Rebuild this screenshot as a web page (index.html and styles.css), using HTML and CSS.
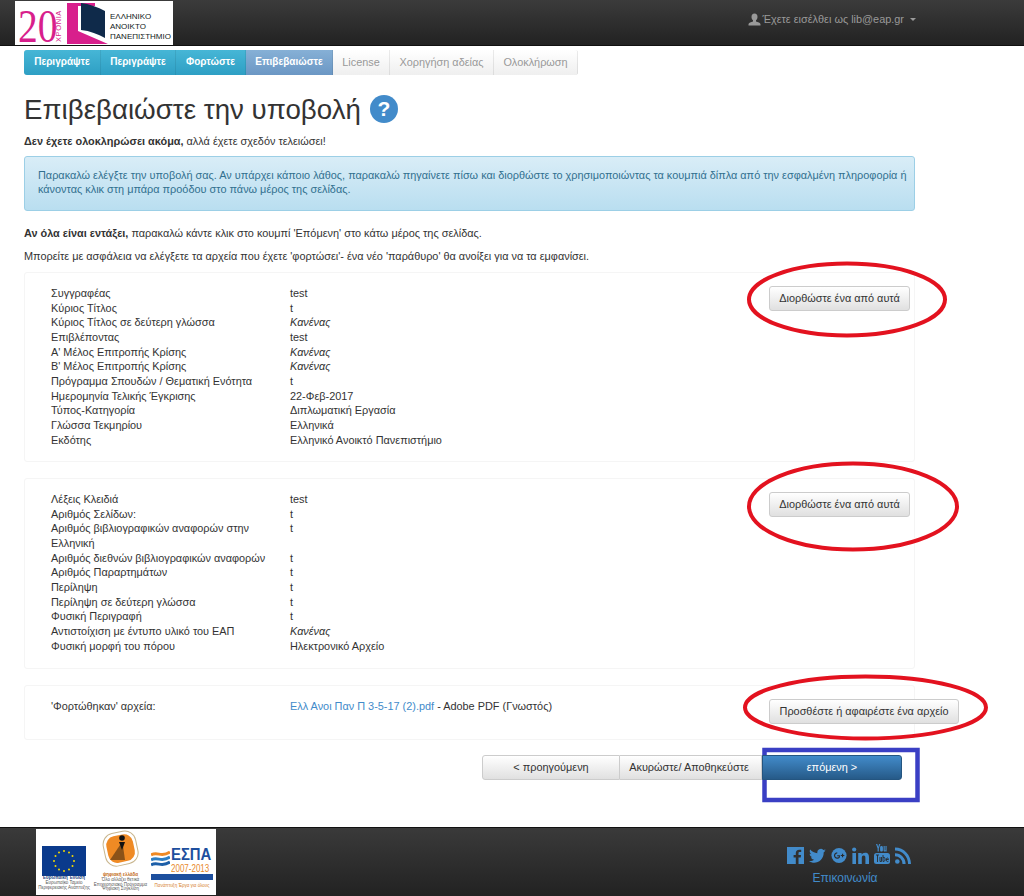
FILE: index.html
```html
<!DOCTYPE html>
<html lang="el">
<head>
<meta charset="utf-8">
<title>Επιβεβαιώστε την υποβολή</title>
<link rel="stylesheet" href="styles.css">
</head>
<body>
<header class="topbar">
  <div class="logo">
    <svg class="logo-art" width="94" height="44" viewBox="0 0 94 44">
      <text transform="translate(3 41) scale(.86 1)" class="logo-20">20</text>
      <text class="logo-xronia" transform="translate(46 41) rotate(-90)">ΧΡΟΝΙΑ</text>
      <path d="M52 2h11v41h-11z" fill="#d81f8c"/>
      <path d="M52 2h28v3h-28zM63 30l30 13h-30z" fill="#d81f8c"/>
      <path d="M66 2c8 1 17 4 24 8v27c-7-4-15-7-24-8z" fill="#0f2a4a"/>
    </svg>
    <div class="logo-text"><span>ΕΛΛΗΝΙΚΟ</span><span>ΑΝΟΙΚΤΟ</span><span>ΠΑΝΕΠΙΣΤΗΜΙΟ</span></div>
  </div>
  <div class="user">
    <svg width="13" height="13" viewBox="0 0 13 13"><path d="M6.5 0.5c2 0 3 1.5 3 3.500 0 1.500-.7 2.700-1.500 3.300v1.200c1.800.6 4.500 1.300 4.500 2.700v1.300h-12v-1.300c0-1.400 2.700-2.100 4.500-2.700v-1.200c-.8-.6-1.500-1.800-1.500-3.300 0-2 1-3.500 3-3.500z" fill="#999"/></svg>
    <span>Έχετε εισέλθει ως lib@eap.gr</span>
    <i class="caret"></i>
  </div>
</header>

<main class="page">
  <nav class="steps">
    <span class="step done">Περιγράψτε</span>
    <span class="step done">Περιγράψτε</span>
    <span class="step done">Φορτώστε</span>
    <span class="step current">Επιβεβαιώστε</span>
    <span class="step todo">License</span>
    <span class="step todo">Χορηγήση αδείας</span>
    <span class="step todo">Ολοκλήρωση</span>
  </nav>

  <h1 class="title">Επιβεβαιώστε την υποβολή<span class="help">?</span></h1>
  <p class="lead"><b>Δεν έχετε ολοκληρώσει ακόμα,</b> αλλά έχετε σχεδόν τελειώσει!</p>
  <div class="alert">Παρακαλώ ελέγξτε την υποβολή σας. Αν υπάρχει κάποιο λάθος, παρακαλώ πηγαίνετε πίσω και διορθώστε το χρησιμοποιώντας τα κουμπιά δίπλα από την εσφαλμένη πληροφορία ή κάνοντας κλικ στη μπάρα προόδου στο πάνω μέρος της σελίδας.</div>
  <p class="note"><b>Αν όλα είναι εντάξει,</b> παρακαλώ κάντε κλικ στο κουμπί 'Επόμενη' στο κάτω μέρος της σελίδας.</p>
  <p class="note second">Μπορείτε με ασφάλεια να ελέγξετε τα αρχεία που έχετε 'φορτώσει'- ένα νέο 'παράθυρο' θα ανοίξει για να τα εμφανίσει.</p>

  <section class="panel first">
    <dl class="fields">
      <dt>Συγγραφέας</dt><dd>test</dd>
      <dt>Κύριος Τίτλος</dt><dd>t</dd>
      <dt>Κύριος Τίτλος σε δεύτερη γλώσσα</dt><dd><em>Κανένας</em></dd>
      <dt>Επιβλέποντας</dt><dd>test</dd>
      <dt>Α' Μέλος Επιτροπής Κρίσης</dt><dd><em>Κανένας</em></dd>
      <dt>Β' Μέλος Επιτροπής Κρίσης</dt><dd><em>Κανένας</em></dd>
      <dt>Πρόγραμμα Σπουδών / Θεματική Ενότητα</dt><dd>t</dd>
      <dt>Ημερομηνία Τελικής Έγκρισης</dt><dd>22-Φεβ-2017</dd>
      <dt>Τύπος-Κατηγορία</dt><dd>Διπλωματική Εργασία</dd>
      <dt>Γλώσσα Τεκμηρίου</dt><dd>Ελληνικά</dd>
      <dt>Εκδότης</dt><dd>Ελληνικό Ανοικτό Πανεπιστήμιο</dd>
    </dl>
    <button class="btn edit">Διορθώστε ένα από αυτά</button>
  </section>

  <section class="panel second-panel">
    <dl class="fields">
      <dt>Λέξεις Κλειδιά</dt><dd>test</dd>
      <dt>Αριθμός Σελίδων:</dt><dd>t</dd>
      <dt>Αριθμός βιβλιογραφικών αναφορών στην Ελληνική</dt><dd>t</dd>
      <dt>Αριθμός διεθνών βιβλιογραφικών αναφορών</dt><dd>t</dd>
      <dt>Αριθμός Παραρτημάτων</dt><dd>t</dd>
      <dt>Περίληψη</dt><dd>t</dd>
      <dt>Περίληψη σε δεύτερη γλώσσα</dt><dd>t</dd>
      <dt>Φυσική Περιγραφή</dt><dd>t</dd>
      <dt>Αντιστοίχιση με έντυπο υλικό του ΕΑΠ</dt><dd><em>Κανένας</em></dd>
      <dt>Φυσική μορφή του πόρου</dt><dd>Ηλεκτρονικό Αρχείο</dd>
    </dl>
    <button class="btn edit">Διορθώστε ένα από αυτά</button>
  </section>

  <section class="panel files">
    <dl class="fields">
      <dt>'Φορτώθηκαν' αρχεία:</dt><dd><a href="#">Ελλ Ανοι Παν Π 3-5-17 (2).pdf</a> - Adobe PDF (Γνωστός)</dd>
    </dl>
    <button class="btn edit">Προσθέστε ή αφαιρέστε ένα αρχείο</button>
  </section>

  <div class="actions">
    <button class="btn prev">&lt; προηγούμενη</button>
    <button class="btn cancel">Ακυρώστε/ Αποθηκεύστε</button>
    <button class="btn next">επόμενη &gt;</button>
  </div>
</main>

<footer class="footer">
  <div class="sponsors">
    <div class="eu">
      <svg width="44" height="30" viewBox="0 0 44 30"><rect width="44" height="30" fill="#0a3a8c"/><g fill="#f5d800"><circle cx="22" cy="5" r="1"/><circle cx="27" cy="6.500" r="1"/><circle cx="30.500" cy="10" r="1"/><circle cx="32" cy="15" r="1"/><circle cx="30.500" cy="20" r="1"/><circle cx="27" cy="23.500" r="1"/><circle cx="22" cy="25" r="1"/><circle cx="17" cy="23.500" r="1"/><circle cx="13.500" cy="20" r="1"/><circle cx="12" cy="15" r="1"/><circle cx="13.500" cy="10" r="1"/><circle cx="17" cy="6.500" r="1"/></g></svg>
      <b>Ευρωπαϊκή Ένωση</b><span>Ευρωπαϊκό Ταμείο</span><span>Περιφερειακής Ανάπτυξης</span>
    </div>
    <div class="digital">
      <svg width="40" height="37" viewBox="0 0 40 37"><rect x="3" y="2" width="33" height="33" rx="11" fill="none" stroke="#c9b68e" transform="rotate(-12 20 18)"/><rect x="6" y="5" width="27" height="27" rx="9" fill="#ef8a24" transform="rotate(-12 20 18)"/><path d="M9 30l10-15 3 1 2 14z" fill="#8a5218"/><circle cx="21" cy="8" r="2.800" fill="#111"/><path d="M18 12h6l-3 8z" fill="#111"/></svg>
      <b>ψηφιακή ελλάδα</b><span>Όλο αλλάζει θετικά</span><span>Επιχειρησιακό Πρόγραμμα</span><span>Ψηφιακή Σύγκλιση</span>
    </div>
    <div class="espa">
      <svg class="espa-waves" width="19" height="17" viewBox="0 0 19 17"><g fill="none" stroke-width="3"><path d="M0 4c6-4 11 3 19-3" stroke="#f08a24"/><path d="M0 9c6-4 11 3 19-3" stroke="#2f7fc4"/><path d="M0 14c6-4 11 3 19-3" stroke="#1d5fa8"/></g></svg>
      <strong>ΕΣΠΑ</strong>
      <em>2007-2013</em>
      <i class="espa-bar"></i>
      <span>Πανάπτυξη Έργα για όλους</span>
    </div>
  </div>
  <div class="contact">
    <div class="social">
      <svg width="17" height="17" viewBox="0 0 17 17"><path d="M0 0h17v17h-5.500v-6.500h2.200l.4-2.600h-2.600v-1.600c0-.8.300-1.300 1.400-1.300h1.300v-2.300h-2.100c-2.100 0-3.300 1.300-3.300 3.500v1.700h-2.200v2.600h2.200v6.500h-8.800z" fill="#428bca"/></svg>
      <svg width="17" height="17" viewBox="0 0 18 17"><path d="M18 3.200c-.7.300-1.400.5-2.100.6.800-.5 1.300-1.200 1.600-2-.7.400-1.500.7-2.300.9a3.700 3.700 0 0 0-6.300 3.400c-3.100-.2-5.800-1.600-7.600-3.900-1 1.700-.5 3.800 1.100 4.900-.6 0-1.200-.2-1.700-.5 0 1.800 1.300 3.300 3 3.700-.5.100-1.100.2-1.700.1.500 1.500 1.900 2.500 3.500 2.600a7.500 7.500 0 0 1-5.500 1.500c5.900 3.700 15.600.9 15.600-9.400 .7-.5 1.400-1.200 1.900-1.900z" fill="#428bca"/></svg>
      <svg width="16" height="17" viewBox="0 0 18 17"><circle cx="9" cy="8.500" r="8.500" fill="#428bca"/><path d="M7 5.500a3 3 0 1 0 2.400 4.800v-1.500h-2.400" fill="none" stroke="#2a2a2a" stroke-width="1.300"/><path d="M11 8.500h4M13 6.500v4" stroke="#2a2a2a" stroke-width="1.300"/></svg>
      <svg width="17" height="17" viewBox="0 0 17 17"><g fill="#428bca"><circle cx="2.200" cy="2.500" r="2.100"/><rect x=".4" y="6" width="3.600" height="11"/><path d="M6.200 6h3.400v1.600c.6-1 1.800-1.900 3.500-1.900 3.200 0 3.900 2.100 3.900 4.800v6.500h-3.600v-5.800c0-1.400-.1-2.700-1.700-2.700s-1.900 1.300-1.900 2.700v5.800h-3.600z"/></g></svg>
      <svg width="16" height="20" viewBox="0 0 16 20"><g fill="#428bca"><path d="M2 0h1.300l.9 3 .9-3h1.300l-1.600 4.500v3h-1.200v-3zM7.500 2c1 0 1.400.6 1.400 1.500v2.500c0 1-.5 1.600-1.400 1.600s-1.400-.6-1.400-1.600v-2.500c0-.9.400-1.500 1.400-1.500zM9.600 2h1.100v4.200c0 .4.500.4.800 0v-4.200h1.100v5.400h-1.100v-.5c-.8.900-1.900.7-1.900-.4z"/><rect y="9" width="16" height="11" rx="2.500"/></g><path d="M2 11h3M3.500 11v7M6 13v4.500h1.500V13M9 11v6.500c1.500 0 2-.5 2-2.200s-.5-2.300-2-1.800M12 15.500h2.500c0-2-2.300-2-2.300.2s1.500 2.200 2.300 1.500" fill="none" stroke="#2a2a2a" stroke-width=".9"/></svg>
      <svg width="16" height="17" viewBox="0 0 16 17"><g fill="#428bca"><circle cx="2.300" cy="14.500" r="2.300"/><path d="M0 6.200v3.100a7.500 7.500 0 0 1 7.500 7.700h3.100A10.600 10.600 0 0 0 0 6.200z"/><path d="M0 .5v3.100c7.400 0 13.100 6 13.100 13.400h2.900C16 8 9 .5 0 .5z"/></g></svg>
    </div>
    <a class="contact-link" href="#">Επικοινωνία</a>
  </div>
</footer>

<svg class="marks" width="1024" height="896" viewBox="0 0 1024 896">
  <g fill="none" stroke="#e3121f" stroke-width="4">
    <ellipse cx="847" cy="299.500" rx="98" ry="36"/>
    <ellipse cx="853" cy="506.500" rx="104" ry="43"/>
    <ellipse cx="865.500" cy="707.500" rx="120.500" ry="31"/>
  </g>
  <rect x="764.500" y="750" width="153" height="50" fill="none" stroke="#3a3fc4" stroke-width="4.500"/>
</svg>
</body>
</html>
```
FILE: styles.css
```css
* { box-sizing: border-box; }
html, body { margin: 0; padding: 0; }
body {
  width: 1024px;
  height: 896px;
  overflow: hidden;
  position: relative;
  background: #fff;
  color: #333;
  font: 10.9px/14.67px "Liberation Sans", Arial, sans-serif;
}
.topbar {
  height: 46px;
  background: linear-gradient(#3b3b3b, #222);
  border-bottom: 1px solid #111;
  display: flex;
  justify-content: space-between;
  padding: 1px 108px 0 15px;
}
.logo {
  width: 158px;
  height: 44px;
  background: #fff;
  display: flex;
  color: #122;
}
.logo-art { flex: none; margin-right: 1px; overflow: visible; }
.logo-20 { font: 46px "Liberation Serif", serif; fill: #d81f8c; }
.logo-xronia { font: 7.500px "Liberation Sans", sans-serif; fill: #d81f8c; letter-spacing: .6px; }
.logo-text {
  display: flex;
  flex-direction: column;
  justify-content: center;
  font-size: 8px;
  line-height: 10px;
  white-space: nowrap;
  padding-top: 7px;
}
.user {
  display: flex;
  align-items: center;
  gap: 1px;
  height: 36px;
  color: #9a9a9a;
}
.caret {
  width: 0;
  height: 0;
  margin-left: 5px;
  border: 3px solid transparent;
  border-top-color: #9a9a9a;
  border-bottom: 0;
}
.page { padding: 4px 109px 0 24px; }
.steps {
  display: flex;
  height: 25px;
  width: 554px;
  border-radius: 3px;
  box-shadow: 0 0 0 1px #e3e3e3 inset;
  overflow: hidden;
}
.step {
  display: flex;
  align-items: center;
  justify-content: center;
  border-right: 1px solid rgba(0, 0, 0, .08);
  white-space: nowrap;
}
.step:nth-child(1) { width: 77px; }
.step:nth-child(2) { width: 75px; }
.step:nth-child(3) { width: 70px; }
.step:nth-child(4) { width: 87px; }
.step:nth-child(5) { width: 57px; }
.step:nth-child(6) { width: 104px; }
.step:nth-child(7) { flex: 1; }
.done { background: linear-gradient(#46b6d6, #2e9fc4); color: #fff; font-size: 10px; font-weight: bold; }
.current { background: linear-gradient(#86b0d6, #6b97c4); color: #fff; font-size: 10px; font-weight: bold; }
.todo { background: linear-gradient(#fff, #efefef); color: #999; }
.title {
  margin: 19px 0 0;
  height: 32px;
  font-size: 27.700px;
  line-height: 32px;
  font-weight: normal;
  color: #333;
  display: flex;
  align-items: flex-start;
  gap: 9px;
  white-space: pre;
}
.help {
  width: 28px;
  height: 28px;
  margin-top: 1px;
  border-radius: 50%;
  background: #428bca;
  color: #fff;
  font-size: 21px;
  line-height: 28px;
  font-weight: bold;
  text-align: center;
}
.lead { margin: 8px 0 0; }
.alert {
  margin-top: 7px;
  height: 55px;
  padding: 11px 3px 11px 13px;
  border: 1px solid #9ccfe6;
  border-radius: 3px;
  background: linear-gradient(#d9edf7, #b9def0);
  color: #31708f;
}
.note { margin: 15px 0 0; }
.note.second { margin-top: 9px; }
.panel {
  display: flex;
  justify-content: space-between;
  align-items: flex-start;
  border: 1px solid #f5f5f5;
  border-radius: 3px;
  padding: 13px 4px 14px 26px;
}
.panel.first { margin-top: 8px; height: 190px; }
.second-panel { margin-top: 16px; height: 191px; }
.files { margin-top: 16px; height: 55px; }
.fields {
  margin: 0;
  display: grid;
  grid-template-columns: 225px 390px;
  column-gap: 14px;
}
.fields dt, .fields dd { margin: 0; }
.fields a { color: #428bca; text-decoration: none; }
.btn {
  font: inherit;
  color: #333;
  height: 25px;
  padding: 0;
  border: 1px solid #ccc;
  border-radius: 3px;
  background: linear-gradient(#fff, #e0e0e0);
}
.edit { width: 141px; }
.files .edit { width: 190px; margin-right: -49px; }
.actions {
  display: flex;
  margin: 15px 0 0 458px;
}
.prev { width: 138px; border-radius: 3px 0 0 3px; }
.cancel { width: 142px; border-left: 0; border-radius: 0; padding-right: 3px; }
.next {
  width: 140px;
  position: relative;
  z-index: 1;
  border: 1px solid #245580;
  border-radius: 0 3px 3px 0;
  background: linear-gradient(#428bca, #265a88);
  color: #fff;
}
.footer {
  position: absolute;
  left: 0;
  right: 0;
  bottom: 0;
  height: 69px;
  background: linear-gradient(#3a3a3a, #222);
  border-top: 1px solid #111;
  display: flex;
  justify-content: space-between;
  padding: 1px 113px 0 36px;
}
.sponsors {
  width: 180px;
  height: 66px;
  background: #fff;
  display: flex;
  justify-content: space-between;
  align-items: flex-start;
  padding: 0 3px 0 2px;
  font-size: 4.500px;
  line-height: 4.800px;
  color: #555;
  white-space: nowrap;
}
.eu, .digital { display: flex; flex-direction: column; align-items: center; width: 52px; }
.eu { padding-top: 17px; }
.eu b { color: #1d3f7a; }
.digital { padding-top: 1px; width: 54px; }
.digital svg { margin-bottom: 6px; }
.digital b { color: #c26a1a; }
.espa {
  width: 62px;
  padding-top: 18px;
  display: grid;
  grid-template-columns: 20px 42px;
}
.espa-waves { grid-row: 1 / 3; margin-top: 4px; }
.espa strong {
  font-size: 16px;
  line-height: 16px;
  color: #1d4f9e;
  transform: scaleX(.93);
  transform-origin: left;
}
.espa em {
  font: normal 10px/11px "Liberation Sans", sans-serif;
  color: #e8892b;
  transform: scaleX(.8);
  transform-origin: left;
}
.espa-bar { grid-column: 1 / 3; height: 6px; margin: 0 0 4px; background: #1d4f9e; }
.espa span { grid-column: 1 / 3; color: #d6801f; text-align: center; }
.contact {
  width: 124px;
  padding-top: 15px;
  display: flex;
  flex-direction: column;
  align-items: center;
}
.social { display: flex; align-items: flex-end; gap: 5px; height: 20px; }
.contact-link {
  margin: 7px 8px 0 0;
  font-size: 12px;
  color: #428bca;
  text-decoration: none;
}
.marks {
  position: absolute;
  left: 0;
  top: 0;
  pointer-events: none;
}
```
